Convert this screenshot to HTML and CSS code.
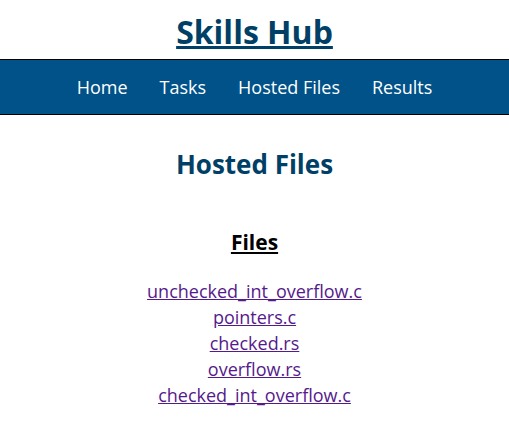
FILE: index.html
```html
<!DOCTYPE html>
<html lang="en">
<head>
<meta charset="utf-8">
<title>Skills Hub - Hosted Files</title>
<link rel="stylesheet" href="styles.css">
</head>
<body>
<header class="site-header">
  <h1 class="site-title"><a href="#">Skills Hub</a></h1>
  <nav class="main-nav">
    <a href="#">Home</a>
    <a href="#">Tasks</a>
    <a href="#">Hosted Files</a>
    <a href="#">Results</a>
  </nav>
</header>
<main class="content">
  <h2 class="page-title">Hosted Files</h2>
  <h3 class="section-title">Files</h3>
  <ul class="file-list">
    <li><a href="#">unchecked_int_overflow.c</a></li>
    <li><a href="#">pointers.c</a></li>
    <li><a href="#">checked.rs</a></li>
    <li><a href="#">overflow.rs</a></li>
    <li><a href="#">checked_int_overflow.c</a></li>
  </ul>
</main>
</body>
</html>
```
FILE: styles.css
```css
html, body {
  margin: 0;
  padding: 0;
  background: #fff;
  font-family: "Open Sans", sans-serif;
}
.site-header {
  text-align: center;
}
.site-title {
  margin: 0;
  padding: 12px 0 7px;
  font-size: 32px;
  line-height: 40px;
  font-weight: 700;
}
.site-title a {
  color: #003f66;
  text-decoration: underline;
}
.main-nav {
  display: flex;
  justify-content: center;
  gap: 32px;
  background: #005288;
  border-top: 1px solid #000;
  border-bottom: 1px solid #000;
  padding: 15px 0;
  font-size: 18px;
  line-height: 24px;
}
.main-nav a {
  color: #fff;
  text-decoration: none;
}
.content {
  text-align: center;
}
.page-title {
  margin: 31px 0 0;
  font-size: 26px;
  line-height: 36px;
  color: #003f66;
}
.section-title {
  margin: 46px 0 0;
  font-size: 21px;
  line-height: 28px;
  color: #000;
  text-decoration: underline;
}
.file-list {
  list-style: none;
  margin: 22px 0 0;
  padding: 0;
  font-size: 18px;
  line-height: 26px;
}
.file-list a {
  color: #551a8b;
}
```
